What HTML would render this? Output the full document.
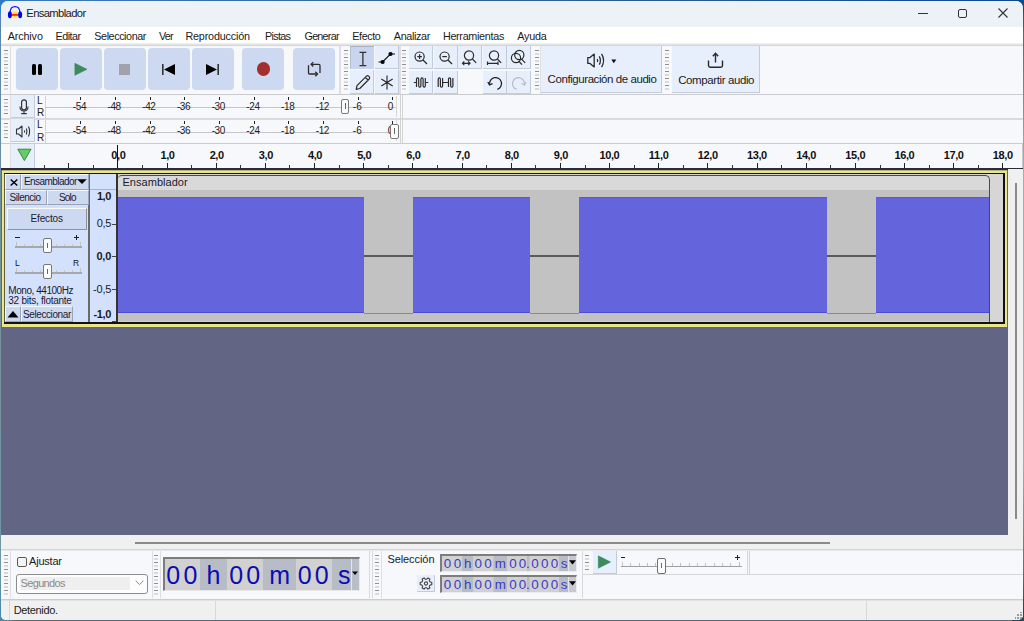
<!DOCTYPE html><html><head><meta charset="utf-8"><style>
*{box-sizing:border-box;margin:0;padding:0}
html,body{width:1024px;height:621px;overflow:hidden;background:#35608a;font-family:"Liberation Sans",sans-serif;color:#1b1b1b}
.a{position:absolute}
.t{position:absolute;white-space:nowrap;font-size:11px;line-height:13px}
.grip{position:absolute;width:4px;background:repeating-linear-gradient(to bottom,#8f8f8f 0,#8f8f8f 1px,transparent 1px,transparent 3px,#dadada 3px,#dadada 5px,transparent 5px,transparent 7px)}
svg{position:absolute;overflow:visible}
</style></head><body>
<div class="a" style="left:0px;top:0px;width:512px;height:310px;background:#4a7cae"></div>
<div class="a" style="left:512px;top:0px;width:512px;height:310px;background:#1c4f88"></div>
<div class="a" style="left:0px;top:310px;width:512px;height:311px;background:#4f86a6"></div>
<div class="a" style="left:512px;top:310px;width:512px;height:311px;background:#24506c"></div>
<div class="a" style="left:0px;top:0px;width:12px;height:12px;background:#2f7bc6"></div>
<div class="a" style="left:1012px;top:0px;width:12px;height:12px;background:#0b4a90"></div>
<div class="a" style="left:1012px;top:609px;width:12px;height:12px;background:#1a4866"></div>
<div class="a" style="left:0px;top:609px;width:12px;height:12px;background:#4a88a8"></div>
<div class="a" style="left:12px;top:620px;width:1000px;height:1px;background:#5a6a72"></div>
<div class="a" style="left:0px;top:12px;width:1px;height:597px;background:linear-gradient(to bottom,#4f82b8 0,#5b87ad 25px,#7a939a 290px,#6f97a6 560px,#4a88a8 597px)"></div>
<div class="a" style="left:1023px;top:12px;width:1px;height:597px;background:linear-gradient(to bottom,#1f5290 0,#4a6a94 25px,#a9abae 150px,#a9abae 450px,#5a6f7c 560px,#1a4866 597px)"></div>
<div class="a" style="left:12px;top:0px;width:1000px;height:1px;background:linear-gradient(to right,#3a78bc,#35669a 400px,#26588f 700px,#0b4a90)"></div>
<div class="a" style="left:1px;top:1px;width:1022px;height:619px;background:#f6f8fc;border-radius:7px 7px 5px 5px;overflow:hidden"></div>
<div class="a" style="left:1px;top:1px;width:1022px;height:26px;background:#edf2f7;border-radius:7px 7px 0 0"></div>
<svg style="left:7px;top:5px" width="16" height="15" viewBox="0 0 16 15">
<defs><radialGradient id="g1" cx="50%" cy="50%" r="50%"><stop offset="0" stop-color="#ffd000"/><stop offset="0.6" stop-color="#ffe040"/><stop offset="1" stop-color="#fff0b0"/></radialGradient></defs>
<path d="M3.2 7.5 Q3.2 1.6 8 1.6 Q12.8 1.6 12.8 7.5" fill="none" stroke="#1414ff" stroke-width="1.1"/>
<ellipse cx="8" cy="9.6" rx="3.6" ry="3.9" fill="url(#g1)"/>
<rect x="4.5" y="9" width="7" height="1.8" fill="#ff2a00"/>
<ellipse cx="2.9" cy="9.8" rx="2" ry="3.5" fill="#0000f0"/>
<ellipse cx="13.1" cy="9.8" rx="2" ry="3.5" fill="#0000f0"/>
</svg>
<div class="t" style="left:26.30px;top:8.3px;font-size:11.2px;line-height:11.2px;font-weight:normal;letter-spacing:-0.609px;color:#202020">Ensamblador</div>
<div class="a" style="left:918px;top:13px;width:10px;height:1px;background:#333"></div>
<div class="a" style="left:958px;top:8.5px;width:9px;height:9px;border:1.2px solid #333;border-radius:2px"></div>
<svg style="left:998px;top:8px" width="10" height="10" viewBox="0 0 10 10"><path d="M0.5 0.5L9.5 9.5M9.5 0.5L0.5 9.5" stroke="#333" stroke-width="1.1"/></svg>
<div class="a" style="left:1px;top:27px;width:1022px;height:17px;background:#ffffff"></div>
<div class="a" style="left:1px;top:43px;width:1022px;height:1px;background:#f0f0f0"></div>
<div class="a" style="left:1px;top:44px;width:1022px;height:1px;background:#e4e4e4"></div>
<div class="a" style="left:1px;top:45px;width:1022px;height:1px;background:#d4d5d8"></div>
<div class="t" style="left:7.70px;top:31px;font-size:10.8px;line-height:10.8px;font-weight:normal;letter-spacing:-0.133px;color:#1b1b1b">Archivo</div>
<div class="t" style="left:55.50px;top:31px;font-size:10.8px;line-height:10.8px;font-weight:normal;letter-spacing:-0.522px;color:#1b1b1b">Editar</div>
<div class="t" style="left:94.30px;top:31px;font-size:10.8px;line-height:10.8px;font-weight:normal;letter-spacing:-0.432px;color:#1b1b1b">Seleccionar</div>
<div class="t" style="left:159.10px;top:31px;font-size:10.8px;line-height:10.8px;font-weight:normal;letter-spacing:-0.900px;color:#1b1b1b">Ver</div>
<div class="t" style="left:185.40px;top:31px;font-size:10.8px;line-height:10.8px;font-weight:normal;letter-spacing:-0.183px;color:#1b1b1b">Reproducción</div>
<div class="t" style="left:265.10px;top:31px;font-size:10.8px;line-height:10.8px;font-weight:normal;letter-spacing:-0.721px;color:#1b1b1b">Pistas</div>
<div class="t" style="left:304.50px;top:31px;font-size:10.8px;line-height:10.8px;font-weight:normal;letter-spacing:-0.769px;color:#1b1b1b">Generar</div>
<div class="t" style="left:352.30px;top:31px;font-size:10.8px;line-height:10.8px;font-weight:normal;letter-spacing:-0.421px;color:#1b1b1b">Efecto</div>
<div class="t" style="left:393.80px;top:31px;font-size:10.8px;line-height:10.8px;font-weight:normal;letter-spacing:-0.359px;color:#1b1b1b">Analizar</div>
<div class="t" style="left:442.90px;top:31px;font-size:10.8px;line-height:10.8px;font-weight:normal;letter-spacing:-0.309px;color:#1b1b1b">Herramientas</div>
<div class="t" style="left:517.30px;top:31px;font-size:10.8px;line-height:10.8px;font-weight:normal;letter-spacing:-0.254px;color:#1b1b1b">Ayuda</div>
<div class="a" style="left:1px;top:46px;width:1022px;height:48px;background:#f6f8fc"></div>
<div class="grip" style="left:4px;top:50px;height:41px"></div>
<div class="a" style="left:10px;top:45px;width:1px;height:49px;background:#dedfe3"></div>
<div class="a" style="left:16px;top:48px;width:42px;height:42px;background:#cdd9f1;border-radius:4px"></div>
<div class="a" style="left:60px;top:48px;width:42px;height:42px;background:#cdd9f1;border-radius:4px"></div>
<div class="a" style="left:104px;top:48px;width:42px;height:42px;background:#cdd9f1;border-radius:4px"></div>
<div class="a" style="left:148px;top:48px;width:42px;height:42px;background:#cdd9f1;border-radius:4px"></div>
<div class="a" style="left:192px;top:48px;width:42px;height:42px;background:#cdd9f1;border-radius:4px"></div>
<div class="a" style="left:242px;top:48px;width:42px;height:42px;background:#cdd9f1;border-radius:4px"></div>
<div class="a" style="left:293px;top:48px;width:42px;height:42px;background:#cdd9f1;border-radius:4px"></div>
<div class="a" style="left:31.5px;top:64px;width:4.5px;height:11px;background:#000;border-radius:1.5px"></div>
<div class="a" style="left:37.8px;top:64px;width:4.5px;height:11px;background:#000;border-radius:1.5px"></div>
<svg style="left:74px;top:63px" width="14" height="13" viewBox="0 0 14 13"><path d="M0.9 0.3 L13 6.3 L0.9 12.3 Z" fill="#3b8b5f" stroke="#3b8b5f" stroke-width="0.6" stroke-linejoin="round"/></svg>
<div class="a" style="left:119px;top:64px;width:11px;height:11px;background:#a1a2aa"></div>
<svg style="left:161px;top:63px" width="16" height="13" viewBox="0 0 16 13"><rect x="1" y="1" width="1.6" height="11" fill="#333"/><path d="M3 6.5 L14 1 L14 12 Z" fill="#000"/></svg>
<svg style="left:205px;top:63px" width="16" height="13" viewBox="0 0 16 13"><path d="M1 1 L12 6.5 L1 12 Z" fill="#000"/><rect x="12.4" y="1" width="1.6" height="11" fill="#333"/></svg>
<div class="a" style="left:256.8px;top:62.4px;width:13.2px;height:13.2px;background:#a3302f;border-radius:50%"></div>
<svg style="left:305px;top:60px" width="18" height="19" viewBox="0 0 18 19"><path d="M3.5 5.2 V12.8 Q3.5 14 4.7 14 H12.3" fill="none" stroke="#2b2b2b" stroke-width="1.3"/><path d="M10.3 11.8 L12.5 14 L10.3 16.2" fill="none" stroke="#2b2b2b" stroke-width="1.3"/><path d="M15 13.1 V5.5 Q15 4.3 13.8 4.3 H6.3" fill="none" stroke="#2b2b2b" stroke-width="1.3"/><path d="M8.3 2.1 L6.1 4.3 L8.3 6.5" fill="none" stroke="#2b2b2b" stroke-width="1.3"/></svg>
<div class="a" style="left:339px;top:45px;width:1px;height:49px;background:#dedfe3"></div>
<div class="a" style="left:340px;top:45px;width:1px;height:49px;background:#dedfe3"></div>
<div class="grip" style="left:344px;top:50px;height:41px"></div>
<div class="a" style="left:350px;top:46px;width:24px;height:23px;background:#c9d5ee;border-top:1px solid #aab3c4;border-left:1px solid #b8c0cf"></div>
<div class="a" style="left:375px;top:46px;width:24px;height:23px;background:#e8effc;border-right:1px solid #c3cad8;border-bottom:1px solid #c3cad8"></div>
<div class="a" style="left:350px;top:70px;width:24px;height:24px;background:#e8effc;border-right:1px solid #c3cad8;border-bottom:1px solid #c3cad8"></div>
<div class="a" style="left:375px;top:70px;width:24px;height:24px;background:#e8effc;border-right:1px solid #c3cad8;border-bottom:1px solid #c3cad8"></div>
<svg style="left:358px;top:51px" width="10" height="16" viewBox="0 0 10 16"><path d="M1.5 1.3 H8.3 M4.9 1.3 V14.6 M1.5 14.6 H8.3" fill="none" stroke="#333" stroke-width="1.3"/></svg>
<svg style="left:377px;top:50px" width="20" height="16" viewBox="0 0 20 16"><path d="M1.5 12 H5.5 L13.5 4 H18" fill="none" stroke="#111" stroke-width="1.2"/><circle cx="5.6" cy="12" r="2.1" fill="#000"/><circle cx="13.5" cy="4" r="2.1" fill="#000"/></svg>
<svg style="left:354px;top:74px" width="18" height="17" viewBox="0 0 18 17"><path d="M2.2 15.3 L3 11.6 L12.5 2.1 Q13.5 1.2 14.6 2.2 L15.3 2.9 Q16.2 4 15.2 5 L5.8 14.5 Z M11.4 3.3 L14.1 6" fill="none" stroke="#2a2a2a" stroke-width="1.2" stroke-linejoin="round"/></svg>
<svg style="left:380px;top:75px" width="14" height="15" viewBox="0 0 14 15"><path d="M7 0.5 V14.5 M1.3 4 L12.7 11 M1.3 11 L12.7 4" fill="none" stroke="#222" stroke-width="1.1"/></svg>
<div class="a" style="left:399px;top:45px;width:1px;height:49px;background:#dedfe3"></div>
<div class="a" style="left:400px;top:45px;width:1px;height:49px;background:#dedfe3"></div>
<div class="grip" style="left:402px;top:50px;height:41px"></div>
<div class="a" style="left:409px;top:46px;width:24px;height:23px;background:#e8effc;border-right:1px solid #c3cad8;border-bottom:1px solid #c3cad8"></div>
<div class="a" style="left:434px;top:46px;width:24px;height:23px;background:#e8effc;border-right:1px solid #c3cad8;border-bottom:1px solid #c3cad8"></div>
<div class="a" style="left:458px;top:46px;width:24px;height:23px;background:#e8effc;border-right:1px solid #c3cad8;border-bottom:1px solid #c3cad8"></div>
<div class="a" style="left:483px;top:46px;width:24px;height:23px;background:#e8effc;border-right:1px solid #c3cad8;border-bottom:1px solid #c3cad8"></div>
<div class="a" style="left:507px;top:46px;width:24px;height:23px;background:#e8effc;border-right:1px solid #c3cad8;border-bottom:1px solid #c3cad8"></div>
<div class="a" style="left:409px;top:71px;width:24px;height:23px;background:#e8effc;border-right:1px solid #c3cad8;border-bottom:1px solid #c3cad8"></div>
<div class="a" style="left:434px;top:71px;width:24px;height:23px;background:#e8effc;border-right:1px solid #c3cad8;border-bottom:1px solid #c3cad8"></div>
<div class="a" style="left:483px;top:71px;width:24px;height:23px;background:#e8effc;border-right:1px solid #c3cad8;border-bottom:1px solid #c3cad8"></div>
<div class="a" style="left:507px;top:71px;width:24px;height:23px;background:#e8effc;border-right:1px solid #c3cad8;border-bottom:1px solid #c3cad8"></div>
<svg style="left:412px;top:49px" width="18" height="18" viewBox="0 0 18 18"><circle cx="7.6" cy="7.6" r="4.6" fill="none" stroke="#2a2a2a" stroke-width="1.2"/><path d="M11 11 L15 15" fill="none" stroke="#2a2a2a" stroke-width="1.2" stroke-width="1.4"/><path d="M5.3 7.6 H9.9 M7.6 5.3 V9.9" fill="none" stroke="#2a2a2a" stroke-width="1.2"/></svg>
<svg style="left:437px;top:49px" width="18" height="18" viewBox="0 0 18 18"><circle cx="7.6" cy="7.6" r="4.6" fill="none" stroke="#2a2a2a" stroke-width="1.2"/><path d="M11 11 L15 15" fill="none" stroke="#2a2a2a" stroke-width="1.2" stroke-width="1.4"/><path d="M5.3 7.6 H9.9" fill="none" stroke="#2a2a2a" stroke-width="1.2"/></svg>
<svg style="left:461px;top:49px" width="18" height="18" viewBox="0 0 18 18"><circle cx="8" cy="6.5" r="4.6" fill="none" stroke="#2a2a2a" stroke-width="1.2"/><path d="M11.4 10 L15.2 13.8" fill="none" stroke="#2a2a2a" stroke-width="1.2" stroke-width="1.4"/><path d="M1.5 14.3 H9 M3.3 12.5 L1.5 14.3 L3.3 16.1 M7.2 12.5 L9 14.3 L7.2 16.1" fill="none" stroke="#2a2a2a" stroke-width="1.2"/></svg>
<svg style="left:486px;top:49px" width="18" height="18" viewBox="0 0 18 18"><circle cx="8" cy="6.5" r="4.6" fill="none" stroke="#2a2a2a" stroke-width="1.2"/><path d="M11.4 10 L15.2 13.8" fill="none" stroke="#2a2a2a" stroke-width="1.2" stroke-width="1.4"/><path d="M1.5 14.3 H12 M1.5 12.6 V16 M12 12.6 V16" fill="none" stroke="#2a2a2a" stroke-width="1.2" stroke-width="1.3"/></svg>
<svg style="left:509px;top:49px" width="20" height="18" viewBox="0 0 20 18"><circle cx="10.3" cy="6" r="4.6" fill="none" stroke="#2a2a2a" stroke-width="1.2"/><circle cx="7" cy="9" r="4.6" fill="none" stroke="#2a2a2a" stroke-width="1.2"/><path d="M12.6 10.2 L16.2 13.8 M9.6 12 L13 15.6" fill="none" stroke="#2a2a2a" stroke-width="1.2" stroke-width="1.3"/></svg>
<svg style="left:413px;top:76px" width="16" height="14" viewBox="0 0 16 14"><path d="M0.8 6.5 H3.2 M12.8 6.5 H15.2" fill="none" stroke="#2a2a2a" stroke-width="1.2"/><path d="M3.5 11 V3.3 Q3.5 1.8 4.6 1.8 Q5.7 1.8 5.7 3.3 V9.7 Q5.7 11.2 6.8 11.2 Q7.9 11.2 7.9 9.7 V3.3 Q7.9 1.8 9 1.8 Q10.1 1.8 10.1 3.3 V9.7 Q10.1 11.2 11.2 11.2 Q12.3 11.2 12.3 9.7 V2" fill="none" stroke="#2a2a2a" stroke-width="1.2" stroke-width="1.1"/></svg>
<svg style="left:437px;top:76px" width="18" height="14" viewBox="0 0 18 14"><path d="M1.2 11 V3.3 Q1.2 1.8 2.3 1.8 Q3.4 1.8 3.4 3.3 V9.7 Q3.4 11.2 4.5 11.2 Q5.6 11.2 5.6 9.7 V2 M5.6 6.5 H11.5 M11.5 11 V3.3 Q11.5 1.8 12.6 1.8 Q13.7 1.8 13.7 3.3 V9.7 Q13.7 11.2 14.8 11.2 Q15.9 11.2 15.9 9.7 V2" fill="none" stroke="#2a2a2a" stroke-width="1.2" stroke-width="1.1"/></svg>
<svg style="left:487px;top:75px" width="16" height="16" viewBox="0 0 16 16"><path d="M2.6 9.4 A6 6 0 1 1 10.4 14.3" fill="none" stroke="#222" stroke-width="1.3"/><path d="M0.8 7 L2.5 10 L5.5 8.6" fill="none" stroke="#222" stroke-width="1.3"/></svg>
<svg style="left:511px;top:75px" width="16" height="16" viewBox="0 0 16 16"><path d="M13.4 9.4 A6 6 0 1 0 5.6 14.3" fill="none" stroke="#b4b8c0" stroke-width="1.1"/><path d="M15.2 7 L13.5 10 L10.5 8.6" fill="none" stroke="#b4b8c0" stroke-width="1.1"/></svg>
<div class="grip" style="left:535px;top:50px;height:41px"></div>
<div class="a" style="left:540px;top:45px;width:1px;height:49px;background:#dedfe3"></div>
<div class="a" style="left:541px;top:46px;width:121px;height:47px;background:#e8effc;border-right:1px solid #c3cad8;border-bottom:1px solid #c3cad8"></div>
<svg style="left:586px;top:53px" width="20" height="15" viewBox="0 0 20 15"><path d="M1.8 4.6 H4 L8.2 1.1 V13.9 L4 10.4 H1.8 Z" fill="none" stroke="#2a2a2a" stroke-width="1.3" stroke-linejoin="round"/><path d="M11.3 6 Q12.1 7.5 11.3 9" fill="none" stroke="#2a2a2a" stroke-width="1.3"/><path d="M13.3 3.4 Q15.6 7.5 13.3 11.6" fill="none" stroke="#2a2a2a" stroke-width="1.3"/><path d="M15.6 0.9 Q19.6 7.5 15.6 14.1" fill="none" stroke="#2a2a2a" stroke-width="1.3"/></svg>
<svg style="left:611px;top:59px" width="6" height="5" viewBox="0 0 6 5"><path d="M0.3 0.4 H5.3 L2.8 4.2 Z" fill="#111"/></svg>
<div class="t" style="left:547.60px;top:73.75px;font-size:11.5px;line-height:11.5px;font-weight:normal;letter-spacing:-0.428px;">Configuración de audio</div>
<div class="grip" style="left:665px;top:50px;height:41px"></div>
<div class="a" style="left:672px;top:46px;width:88px;height:47px;background:#e8effc;border-right:1px solid #c3cad8;border-bottom:1px solid #c3cad8"></div>
<svg style="left:706px;top:51px" width="19" height="18" viewBox="0 0 19 18"><path d="M2.5 9.5 V14.5 Q2.5 16.2 4.2 16.2 H14.8 Q16.5 16.2 16.5 14.5 V9.5" fill="none" stroke="#2a2a2a" stroke-width="1.4"/><path d="M9.5 11.5 V2.5 M6.8 5.3 L9.5 2.3 L12.2 5.3" fill="none" stroke="#2a2a2a" stroke-width="1.4"/></svg>
<div class="t" style="left:678.20px;top:75.05px;font-size:11.5px;line-height:11.5px;font-weight:normal;letter-spacing:-0.394px;">Compartir audio</div>
<div class="a" style="left:1px;top:94px;width:1022px;height:1px;background:#cbcbcd"></div>
<div class="a" style="left:1px;top:95px;width:1022px;height:74px;background:#f6f8fc"></div>
<div class="a" style="left:1px;top:118px;width:1022px;height:2px;background:#dadade"></div>
<div class="a" style="left:1px;top:143px;width:1022px;height:1px;background:#cbcbcd"></div>
<div class="a" style="left:10px;top:95px;width:1px;height:73px;background:#dedfe3"></div>
<div class="grip" style="left:4px;top:99px;height:15px"></div>
<div class="a" style="left:11px;top:95px;width:24px;height:23px;background:#e8effc;border-right:1px solid #c3cad8;border-bottom:1px solid #c3cad8"></div>
<div class="t" style="left:37px;top:96px;font-size:10px;line-height:10px;color:#222">L</div>
<div class="t" style="left:37px;top:108px;font-size:10px;line-height:10px;color:#222">R</div>
<div class="a" style="left:45px;top:96px;width:1px;height:11px;background:#d4d4d4"></div>
<div class="a" style="left:45px;top:108.0px;width:1px;height:10px;background:#d4d4d4"></div>
<div class="a" style="left:45px;top:107px;width:351px;height:1px;background:#c6c6c6"></div>
<div class="a" style="left:396px;top:96px;width:1px;height:21px;background:#d8d8d8"></div>
<div class="a" style="left:80px;top:96.5px;width:1px;height:3px;background:#222"></div>
<div class="t" style="left:72.80px;top:101.8px;font-size:10px;line-height:10px;font-weight:normal;letter-spacing:-0.396px;color:#222">-54</div>
<div class="a" style="left:115px;top:96.5px;width:1px;height:3px;background:#222"></div>
<div class="t" style="left:107.51px;top:101.8px;font-size:10px;line-height:10px;font-weight:normal;letter-spacing:-0.396px;color:#222">-48</div>
<div class="a" style="left:150px;top:96.5px;width:1px;height:3px;background:#222"></div>
<div class="t" style="left:142.22px;top:101.8px;font-size:10px;line-height:10px;font-weight:normal;letter-spacing:-0.396px;color:#222">-42</div>
<div class="a" style="left:184px;top:96.5px;width:1px;height:3px;background:#222"></div>
<div class="t" style="left:176.93px;top:101.8px;font-size:10px;line-height:10px;font-weight:normal;letter-spacing:-0.396px;color:#222">-36</div>
<div class="a" style="left:219px;top:96.5px;width:1px;height:3px;background:#222"></div>
<div class="t" style="left:211.64px;top:101.8px;font-size:10px;line-height:10px;font-weight:normal;letter-spacing:-0.396px;color:#222">-30</div>
<div class="a" style="left:254px;top:96.5px;width:1px;height:3px;background:#222"></div>
<div class="t" style="left:246.35px;top:101.8px;font-size:10px;line-height:10px;font-weight:normal;letter-spacing:-0.396px;color:#222">-24</div>
<div class="a" style="left:288px;top:96.5px;width:1px;height:3px;background:#222"></div>
<div class="t" style="left:281.06px;top:101.8px;font-size:10px;line-height:10px;font-weight:normal;letter-spacing:-0.396px;color:#222">-18</div>
<div class="a" style="left:323px;top:96.5px;width:1px;height:3px;background:#222"></div>
<div class="t" style="left:315.77px;top:101.8px;font-size:10px;line-height:10px;font-weight:normal;letter-spacing:-0.396px;color:#222">-12</div>
<div class="a" style="left:358px;top:96.5px;width:1px;height:3px;background:#222"></div>
<div class="t" style="left:352.78px;top:101.8px;font-size:10px;line-height:10px;font-weight:normal;letter-spacing:0.170px;color:#222">-6</div>
<div class="a" style="left:392px;top:96.5px;width:1px;height:3px;background:#222"></div>
<div class="t" style="left:387.64px;top:101.8px;font-size:10px;line-height:10px;font-weight:normal;letter-spacing:0.000px;color:#222">0</div>
<div class="grip" style="left:4px;top:123px;height:15px"></div>
<div class="a" style="left:11px;top:119px;width:24px;height:23px;background:#e8effc;border-right:1px solid #c3cad8;border-bottom:1px solid #c3cad8"></div>
<div class="t" style="left:37px;top:120px;font-size:10px;line-height:10px;color:#222">L</div>
<div class="t" style="left:37px;top:133px;font-size:10px;line-height:10px;color:#222">R</div>
<div class="a" style="left:45px;top:120px;width:1px;height:11px;background:#d4d4d4"></div>
<div class="a" style="left:45px;top:132.6px;width:1px;height:10px;background:#d4d4d4"></div>
<div class="a" style="left:45px;top:132px;width:351px;height:1px;background:#c6c6c6"></div>
<div class="a" style="left:396px;top:120px;width:1px;height:21px;background:#d8d8d8"></div>
<div class="a" style="left:80px;top:121.1px;width:1px;height:3px;background:#222"></div>
<div class="t" style="left:72.80px;top:126.4px;font-size:10px;line-height:10px;font-weight:normal;letter-spacing:-0.396px;color:#222">-54</div>
<div class="a" style="left:115px;top:121.1px;width:1px;height:3px;background:#222"></div>
<div class="t" style="left:107.51px;top:126.4px;font-size:10px;line-height:10px;font-weight:normal;letter-spacing:-0.396px;color:#222">-48</div>
<div class="a" style="left:150px;top:121.1px;width:1px;height:3px;background:#222"></div>
<div class="t" style="left:142.22px;top:126.4px;font-size:10px;line-height:10px;font-weight:normal;letter-spacing:-0.396px;color:#222">-42</div>
<div class="a" style="left:184px;top:121.1px;width:1px;height:3px;background:#222"></div>
<div class="t" style="left:176.93px;top:126.4px;font-size:10px;line-height:10px;font-weight:normal;letter-spacing:-0.396px;color:#222">-36</div>
<div class="a" style="left:219px;top:121.1px;width:1px;height:3px;background:#222"></div>
<div class="t" style="left:211.64px;top:126.4px;font-size:10px;line-height:10px;font-weight:normal;letter-spacing:-0.396px;color:#222">-30</div>
<div class="a" style="left:254px;top:121.1px;width:1px;height:3px;background:#222"></div>
<div class="t" style="left:246.35px;top:126.4px;font-size:10px;line-height:10px;font-weight:normal;letter-spacing:-0.396px;color:#222">-24</div>
<div class="a" style="left:288px;top:121.1px;width:1px;height:3px;background:#222"></div>
<div class="t" style="left:281.06px;top:126.4px;font-size:10px;line-height:10px;font-weight:normal;letter-spacing:-0.396px;color:#222">-18</div>
<div class="a" style="left:323px;top:121.1px;width:1px;height:3px;background:#222"></div>
<div class="t" style="left:315.77px;top:126.4px;font-size:10px;line-height:10px;font-weight:normal;letter-spacing:-0.396px;color:#222">-12</div>
<div class="a" style="left:358px;top:121.1px;width:1px;height:3px;background:#222"></div>
<div class="t" style="left:352.78px;top:126.4px;font-size:10px;line-height:10px;font-weight:normal;letter-spacing:0.170px;color:#222">-6</div>
<div class="a" style="left:392px;top:121.1px;width:1px;height:3px;background:#222"></div>
<div class="t" style="left:387.64px;top:126.4px;font-size:10px;line-height:10px;font-weight:normal;letter-spacing:0.000px;color:#222">0</div>
<div class="a" style="left:400px;top:95px;width:1px;height:48px;background:#d4d4d4"></div>
<div class="a" style="left:402px;top:95px;width:1px;height:48px;background:#d4d4d4"></div>
<svg style="left:17.8px;top:99.3px" width="12" height="16" viewBox="0 0 12 16"><rect x="3.6" y="0.8" width="4.8" height="10" rx="2.4" fill="none" stroke="#333" stroke-width="1.2"/><path d="M2 7.5 Q2 12 6 12 Q10 12 10 7.5 M6 12 V14 M3.2 14.6 H8.8" fill="none" stroke="#333" stroke-width="1.1"/></svg>
<svg style="left:15px;top:125px" width="17" height="13" viewBox="0 0 17 13"><path d="M1.5 4 H3.6 L7 1 V12 L3.6 9 H1.5 Z" fill="none" stroke="#333" stroke-width="1.1" stroke-linejoin="round"/><path d="M9.4 5.5 Q9.9 6.5 9.4 7.5" fill="none" stroke="#333" stroke-width="1.1"/><path d="M11.3 3.6 Q12.8 6.5 11.3 9.4" fill="none" stroke="#333" stroke-width="1.1"/><path d="M13.4 1.6 Q15.9 6.5 13.4 11.4" fill="none" stroke="#333" stroke-width="1.1"/></svg>
<div class="a" style="left:341px;top:98.5px;width:8px;height:15px;background:#fbfbfb;border:1px solid #7a7a7a;border-radius:2px"></div>
<div class="a" style="left:344.6px;top:103px;width:1px;height:6px;background:#666"></div>
<div class="a" style="left:390px;top:123.5px;width:8.5px;height:15px;background:#fbfbfb;border:1px solid #7a7a7a;border-radius:2px"></div>
<div class="a" style="left:393.8px;top:128px;width:1px;height:6px;background:#666"></div>
<div class="a" style="left:11px;top:144px;width:24px;height:24px;background:#e8effc;border-right:1px solid #c3cad8"></div>
<svg style="left:17px;top:148px" width="15" height="14" viewBox="0 0 15 14"><path d="M0.8 1.2 H14 L7.4 12.6 Z" fill="#66cc66" stroke="#2e7d32" stroke-width="0.9" stroke-linejoin="round"/></svg>
<div class="a" style="left:44px;top:165px;width:1px;height:3px;background:#333"></div>
<div class="a" style="left:68px;top:163px;width:1px;height:5px;background:#222"></div>
<div class="a" style="left:93px;top:165px;width:1px;height:3px;background:#333"></div>
<div class="a" style="left:117px;top:163px;width:1px;height:5px;background:#222"></div>
<div class="t" style="left:111.30px;top:150.4px;font-size:11px;line-height:11px;font-weight:bold;letter-spacing:-0.387px;color:#111">0,0</div>
<div class="a" style="left:142px;top:165px;width:1px;height:3px;background:#333"></div>
<div class="a" style="left:167px;top:163px;width:1px;height:5px;background:#222"></div>
<div class="t" style="left:160.47px;top:150.4px;font-size:11px;line-height:11px;font-weight:bold;letter-spacing:-0.387px;color:#111">1,0</div>
<div class="a" style="left:191px;top:165px;width:1px;height:3px;background:#333"></div>
<div class="a" style="left:216px;top:163px;width:1px;height:5px;background:#222"></div>
<div class="t" style="left:209.64px;top:150.4px;font-size:11px;line-height:11px;font-weight:bold;letter-spacing:-0.387px;color:#111">2,0</div>
<div class="a" style="left:240px;top:165px;width:1px;height:3px;background:#333"></div>
<div class="a" style="left:265px;top:163px;width:1px;height:5px;background:#222"></div>
<div class="t" style="left:258.81px;top:150.4px;font-size:11px;line-height:11px;font-weight:bold;letter-spacing:-0.387px;color:#111">3,0</div>
<div class="a" style="left:289px;top:165px;width:1px;height:3px;background:#333"></div>
<div class="a" style="left:314px;top:163px;width:1px;height:5px;background:#222"></div>
<div class="t" style="left:307.98px;top:150.4px;font-size:11px;line-height:11px;font-weight:bold;letter-spacing:-0.387px;color:#111">4,0</div>
<div class="a" style="left:339px;top:165px;width:1px;height:3px;background:#333"></div>
<div class="a" style="left:363px;top:163px;width:1px;height:5px;background:#222"></div>
<div class="t" style="left:357.15px;top:150.4px;font-size:11px;line-height:11px;font-weight:bold;letter-spacing:-0.387px;color:#111">5,0</div>
<div class="a" style="left:388px;top:165px;width:1px;height:3px;background:#333"></div>
<div class="a" style="left:412px;top:163px;width:1px;height:5px;background:#222"></div>
<div class="t" style="left:406.32px;top:150.4px;font-size:11px;line-height:11px;font-weight:bold;letter-spacing:-0.387px;color:#111">6,0</div>
<div class="a" style="left:437px;top:165px;width:1px;height:3px;background:#333"></div>
<div class="a" style="left:462px;top:163px;width:1px;height:5px;background:#222"></div>
<div class="t" style="left:455.49px;top:150.4px;font-size:11px;line-height:11px;font-weight:bold;letter-spacing:-0.387px;color:#111">7,0</div>
<div class="a" style="left:486px;top:165px;width:1px;height:3px;background:#333"></div>
<div class="a" style="left:511px;top:163px;width:1px;height:5px;background:#222"></div>
<div class="t" style="left:504.66px;top:150.4px;font-size:11px;line-height:11px;font-weight:bold;letter-spacing:-0.387px;color:#111">8,0</div>
<div class="a" style="left:535px;top:165px;width:1px;height:3px;background:#333"></div>
<div class="a" style="left:560px;top:163px;width:1px;height:5px;background:#222"></div>
<div class="t" style="left:553.83px;top:150.4px;font-size:11px;line-height:11px;font-weight:bold;letter-spacing:-0.387px;color:#111">9,0</div>
<div class="a" style="left:585px;top:165px;width:1px;height:3px;background:#333"></div>
<div class="a" style="left:609px;top:163px;width:1px;height:5px;background:#222"></div>
<div class="t" style="left:599.50px;top:150.4px;font-size:11px;line-height:11px;font-weight:bold;letter-spacing:-0.397px;color:#111">10,0</div>
<div class="a" style="left:634px;top:165px;width:1px;height:3px;background:#333"></div>
<div class="a" style="left:658px;top:163px;width:1px;height:5px;background:#222"></div>
<div class="t" style="left:648.67px;top:150.4px;font-size:11px;line-height:11px;font-weight:bold;letter-spacing:-0.195px;color:#111">11,0</div>
<div class="a" style="left:683px;top:165px;width:1px;height:3px;background:#333"></div>
<div class="a" style="left:707px;top:163px;width:1px;height:5px;background:#222"></div>
<div class="t" style="left:697.84px;top:150.4px;font-size:11px;line-height:11px;font-weight:bold;letter-spacing:-0.397px;color:#111">12,0</div>
<div class="a" style="left:732px;top:165px;width:1px;height:3px;background:#333"></div>
<div class="a" style="left:757px;top:163px;width:1px;height:5px;background:#222"></div>
<div class="t" style="left:747.01px;top:150.4px;font-size:11px;line-height:11px;font-weight:bold;letter-spacing:-0.397px;color:#111">13,0</div>
<div class="a" style="left:781px;top:165px;width:1px;height:3px;background:#333"></div>
<div class="a" style="left:806px;top:163px;width:1px;height:5px;background:#222"></div>
<div class="t" style="left:796.18px;top:150.4px;font-size:11px;line-height:11px;font-weight:bold;letter-spacing:-0.397px;color:#111">14,0</div>
<div class="a" style="left:830px;top:165px;width:1px;height:3px;background:#333"></div>
<div class="a" style="left:855px;top:163px;width:1px;height:5px;background:#222"></div>
<div class="t" style="left:845.35px;top:150.4px;font-size:11px;line-height:11px;font-weight:bold;letter-spacing:-0.397px;color:#111">15,0</div>
<div class="a" style="left:880px;top:165px;width:1px;height:3px;background:#333"></div>
<div class="a" style="left:904px;top:163px;width:1px;height:5px;background:#222"></div>
<div class="t" style="left:894.52px;top:150.4px;font-size:11px;line-height:11px;font-weight:bold;letter-spacing:-0.397px;color:#111">16,0</div>
<div class="a" style="left:929px;top:165px;width:1px;height:3px;background:#333"></div>
<div class="a" style="left:953px;top:163px;width:1px;height:5px;background:#222"></div>
<div class="t" style="left:943.69px;top:150.4px;font-size:11px;line-height:11px;font-weight:bold;letter-spacing:-0.397px;color:#111">17,0</div>
<div class="a" style="left:978px;top:165px;width:1px;height:3px;background:#333"></div>
<div class="a" style="left:1002px;top:163px;width:1px;height:5px;background:#222"></div>
<div class="t" style="left:992.86px;top:150.4px;font-size:11px;line-height:11px;font-weight:bold;letter-spacing:-0.397px;color:#111">18,0</div>
<div class="a" style="left:117px;top:145px;width:1px;height:23px;background:#111"></div>
<div class="a" style="left:1022px;top:143px;width:1px;height:26px;background:#c8c8c8"></div>
<div class="a" style="left:1px;top:168px;width:1007px;height:367px;background:#636584"></div>
<div class="a" style="left:1px;top:168px;width:1022px;height:2px;background:#2a2c3c"></div>
<div class="a" style="left:2px;top:170px;width:1005px;height:157px;background:#e9e789"></div>
<div class="a" style="left:2px;top:170px;width:1005px;height:1px;background:#b4b27a"></div>
<div class="a" style="left:4px;top:173px;width:1001px;height:151px;background:#111"></div>
<div class="a" style="left:4px;top:174px;width:1px;height:148px;background:#5e5e3c"></div>
<div class="a" style="left:5px;top:174px;width:84px;height:148px;background:#d4e1fd"></div>
<div class="a" style="left:88.3px;top:174px;width:1.6px;height:148px;background:#6a6a6a"></div>
<div class="a" style="left:90px;top:174px;width:26px;height:148px;background:#d4e1fd"></div>
<div class="a" style="left:90px;top:189px;width:26px;height:1px;background:#a9b2c4"></div>
<div class="a" style="left:116px;top:174px;width:1.8px;height:148px;background:#333"></div>
<div class="a" style="left:5px;top:174px;width:16px;height:16px;background:#cdd9f1;border-top:1px solid #f4f7fd;border-left:1px solid #f4f7fd;border-right:1px solid #9aa3b3;border-bottom:1px solid #9aa3b3"></div>
<svg style="left:10px;top:179px" width="8" height="7" viewBox="0 0 8 7"><path d="M0.7 0.4 L7.3 6.6 M7.3 0.4 L0.7 6.6" stroke="#000" stroke-width="1.4"/></svg>
<div class="a" style="left:21px;top:174px;width:68px;height:16px;background:#cdd9f1;border-top:1px solid #f4f7fd;border-left:1px solid #f4f7fd;border-right:1px solid #9aa3b3;border-bottom:1px solid #9aa3b3"></div>
<div class="t" style="left:23.90px;top:176.8px;font-size:10px;line-height:10px;font-weight:normal;letter-spacing:-0.559px;color:#1a1a30">Ensamblador</div>
<svg style="left:77.3px;top:179.3px" width="10" height="5" viewBox="0 0 10 5"><path d="M0.2 0.2 H9.8 L5 5 Z" fill="#000"/></svg>
<div class="a" style="left:5px;top:190px;width:42px;height:15px;background:#cdd9f1;border-top:1px solid #f4f7fd;border-left:1px solid #f4f7fd;border-right:1px solid #9aa3b3;border-bottom:1px solid #9aa3b3"></div>
<div class="a" style="left:47px;top:190px;width:42px;height:15px;background:#cdd9f1;border-top:1px solid #f4f7fd;border-left:1px solid #f4f7fd;border-right:1px solid #9aa3b3;border-bottom:1px solid #9aa3b3"></div>
<div class="t" style="left:9.60px;top:193.0px;font-size:10px;line-height:10px;font-weight:normal;letter-spacing:-0.523px;color:#1a1a30">Silencio</div>
<div class="t" style="left:59.00px;top:193.0px;font-size:10px;line-height:10px;font-weight:normal;letter-spacing:-0.818px;color:#1a1a30">Solo</div>
<div class="a" style="left:7px;top:208px;width:80px;height:22px;background:#cdd9f1;border-top:1.5px solid #f8faff;border-left:1.5px solid #f8faff;border-right:1.5px solid #8a92a0;border-bottom:1.5px solid #8a92a0"></div>
<div class="t" style="left:30.60px;top:213.5px;font-size:10px;line-height:10px;font-weight:normal;letter-spacing:-0.175px;color:#1a1a30">Efectos</div>
<div class="a" style="left:15px;top:237px;width:5px;height:1px;background:#222"></div>
<div class="a" style="left:74px;top:237px;width:5px;height:1px;background:#222"></div>
<div class="a" style="left:76px;top:235px;width:1px;height:5px;background:#222"></div>
<div class="a" style="left:15px;top:246px;width:67px;height:1.5px;background:#a8a8a8"></div>
<div class="a" style="left:15.5px;top:242px;width:1px;height:4px;background:#c4c4c4"></div>
<div class="a" style="left:23.6px;top:243.5px;width:1px;height:2.5px;background:#c4c4c4"></div>
<div class="a" style="left:31.7px;top:243.5px;width:1px;height:2.5px;background:#c4c4c4"></div>
<div class="a" style="left:39.8px;top:243.5px;width:1px;height:2.5px;background:#c4c4c4"></div>
<div class="a" style="left:47.9px;top:243.5px;width:1px;height:2.5px;background:#c4c4c4"></div>
<div class="a" style="left:56.0px;top:243.5px;width:1px;height:2.5px;background:#c4c4c4"></div>
<div class="a" style="left:64.1px;top:243.5px;width:1px;height:2.5px;background:#c4c4c4"></div>
<div class="a" style="left:72.19999999999999px;top:243.5px;width:1px;height:2.5px;background:#c4c4c4"></div>
<div class="a" style="left:80.3px;top:242px;width:1px;height:4px;background:#c4c4c4"></div>
<div class="a" style="left:43.4px;top:238.3px;width:8.4px;height:15px;background:#fdfdfd;border:1px solid #777;border-radius:2px"></div>
<div class="a" style="left:47px;top:243px;width:1px;height:5px;background:#666"></div>
<div class="t" style="left:15.00px;top:258.75px;font-size:8.5px;line-height:8.5px;font-weight:normal;letter-spacing:0.000px;color:#111">L</div>
<div class="t" style="left:73.00px;top:258.75px;font-size:8.5px;line-height:8.5px;font-weight:normal;letter-spacing:0.000px;color:#111">R</div>
<div class="a" style="left:15px;top:272px;width:67px;height:1.5px;background:#a8a8a8"></div>
<div class="a" style="left:15.5px;top:268px;width:1px;height:4px;background:#c4c4c4"></div>
<div class="a" style="left:23.6px;top:269.5px;width:1px;height:2.5px;background:#c4c4c4"></div>
<div class="a" style="left:31.7px;top:269.5px;width:1px;height:2.5px;background:#c4c4c4"></div>
<div class="a" style="left:39.8px;top:269.5px;width:1px;height:2.5px;background:#c4c4c4"></div>
<div class="a" style="left:47.9px;top:269.5px;width:1px;height:2.5px;background:#c4c4c4"></div>
<div class="a" style="left:56.0px;top:269.5px;width:1px;height:2.5px;background:#c4c4c4"></div>
<div class="a" style="left:64.1px;top:269.5px;width:1px;height:2.5px;background:#c4c4c4"></div>
<div class="a" style="left:72.19999999999999px;top:269.5px;width:1px;height:2.5px;background:#c4c4c4"></div>
<div class="a" style="left:80.3px;top:268px;width:1px;height:4px;background:#c4c4c4"></div>
<div class="a" style="left:43.4px;top:264.3px;width:8.4px;height:15px;background:#fdfdfd;border:1px solid #777;border-radius:2px"></div>
<div class="a" style="left:47px;top:269px;width:1px;height:5px;background:#666"></div>
<div class="t" style="left:8.30px;top:285.6px;font-size:10px;line-height:10px;font-weight:normal;letter-spacing:-0.450px;color:#1a1a30">Mono, 44100Hz</div>
<div class="t" style="left:8.30px;top:296.0px;font-size:10px;line-height:10px;font-weight:normal;letter-spacing:-0.266px;color:#1a1a30">32 bits, flotante</div>
<div class="a" style="left:5px;top:306px;width:16px;height:16px;background:#cdd9f1;border-top:1px solid #f4f7fd;border-left:1px solid #f4f7fd;border-right:1px solid #9aa3b3;border-bottom:1px solid #9aa3b3"></div>
<svg style="left:7px;top:310px" width="12" height="8" viewBox="0 0 12 8"><path d="M0.5 7.5 H11.5 L6 1 Z" fill="#000"/></svg>
<div class="a" style="left:21px;top:306px;width:52px;height:16px;background:#cdd9f1;border-top:1px solid #f4f7fd;border-left:1px solid #f4f7fd;border-right:1px solid #9aa3b3;border-bottom:1px solid #9aa3b3"></div>
<div class="t" style="left:23.00px;top:309.5px;font-size:10px;line-height:10px;font-weight:normal;letter-spacing:-0.402px;color:#1a1a30">Seleccionar</div>
<div class="t" style="left:96.90px;top:191.0px;font-size:11px;line-height:11px;font-weight:bold;letter-spacing:-0.387px;color:#1a1a20">1,0</div>
<div class="t" style="left:96.70px;top:218.4px;font-size:11px;line-height:11px;font-weight:normal;letter-spacing:-0.287px;color:#1a1a20">0,5</div>
<div class="t" style="left:96.40px;top:250.6px;font-size:11px;line-height:11px;font-weight:bold;letter-spacing:-0.137px;color:#1a1a20">0,0</div>
<div class="t" style="left:93.00px;top:283.8px;font-size:11px;line-height:11px;font-weight:normal;letter-spacing:-0.179px;color:#1a1a20">-0,5</div>
<div class="t" style="left:93.50px;top:309.2px;font-size:11px;line-height:11px;font-weight:bold;letter-spacing:-0.346px;color:#1a1a20">-1,0</div>
<div class="a" style="left:112px;top:224px;width:4px;height:1.3px;background:#444"></div>
<div class="a" style="left:112px;top:256px;width:4px;height:1.3px;background:#444"></div>
<div class="a" style="left:112px;top:289px;width:4px;height:1.3px;background:#444"></div>
<div class="a" style="left:112px;top:321px;width:4px;height:1px;background:#444"></div>
<div class="a" style="left:118px;top:174px;width:885px;height:148px;background:#d6d6d6"></div>
<div class="a" style="left:118px;top:175px;width:872px;height:147px;background:#d9d9d9;border-top:1px solid #4a4a4a;border-right:1px solid #4a4a4a;border-radius:4px 5px 0 0"></div>
<div class="t" style="left:122.50px;top:176.5px;font-size:11px;line-height:11px;font-weight:normal;letter-spacing:0.035px;color:#1a1a30">Ensamblador</div>
<div class="a" style="left:118px;top:190px;width:871px;height:132px;background:#c2c2c2"></div>
<div class="a" style="left:118px;top:197px;width:246px;height:116px;background:#6464dc"></div>
<div class="a" style="left:118px;top:312px;width:246px;height:1px;background:#4a4ad8"></div>
<div class="a" style="left:118px;top:197px;width:246px;height:1px;background:#5a5ad8"></div>
<div class="a" style="left:413px;top:197px;width:117px;height:116px;background:#6464dc"></div>
<div class="a" style="left:413px;top:312px;width:117px;height:1px;background:#4a4ad8"></div>
<div class="a" style="left:413px;top:197px;width:117px;height:1px;background:#5a5ad8"></div>
<div class="a" style="left:579px;top:197px;width:248px;height:116px;background:#6464dc"></div>
<div class="a" style="left:579px;top:312px;width:248px;height:1px;background:#4a4ad8"></div>
<div class="a" style="left:579px;top:197px;width:248px;height:1px;background:#5a5ad8"></div>
<div class="a" style="left:876px;top:197px;width:113px;height:116px;background:#6464dc"></div>
<div class="a" style="left:876px;top:312px;width:113px;height:1px;background:#4a4ad8"></div>
<div class="a" style="left:876px;top:197px;width:113px;height:1px;background:#5a5ad8"></div>
<div class="a" style="left:364px;top:255.4px;width:49px;height:1.4px;background:#5a5a5a"></div>
<div class="a" style="left:364px;top:313px;width:49px;height:1px;background:#8080d0"></div>
<div class="a" style="left:530px;top:255.4px;width:49px;height:1.4px;background:#5a5a5a"></div>
<div class="a" style="left:530px;top:313px;width:49px;height:1px;background:#8080d0"></div>
<div class="a" style="left:827px;top:255.4px;width:49px;height:1.4px;background:#5a5a5a"></div>
<div class="a" style="left:827px;top:313px;width:49px;height:1px;background:#8080d0"></div>
<div class="a" style="left:118px;top:321px;width:871px;height:1px;background:#d2d2d2"></div>
<div class="a" style="left:1008px;top:169px;width:15px;height:366px;background:#f0f0f0"></div>
<div class="a" style="left:1015px;top:183px;width:2px;height:336px;background:#8a8a8a"></div>
<div class="a" style="left:1px;top:535px;width:1022px;height:15px;background:#f0f0f0"></div>
<div class="a" style="left:135px;top:542px;width:695px;height:2px;background:#8a8a8a"></div>
<div class="a" style="left:1px;top:550px;width:1022px;height:49px;background:#f6f8fc"></div>
<div class="a" style="left:1px;top:549px;width:1022px;height:1px;background:#d2d3d6"></div>
<div class="a" style="left:1px;top:550px;width:1022px;height:1px;background:#e8e9ec"></div>
<div class="a" style="left:583px;top:574px;width:440px;height:1px;background:#d6d7da"></div>
<div class="a" style="left:1px;top:599px;width:1022px;height:1px;background:#cbcbcd"></div>
<div class="grip" style="left:4px;top:555px;height:41px"></div>
<div class="a" style="left:10px;top:551px;width:1px;height:47px;background:#dedfe3"></div>
<div class="a" style="left:16.5px;top:556.5px;width:10px;height:10.5px;background:#f4f4f4;border:1px solid #5a5a5a;border-radius:2px"></div>
<div class="t" style="left:29.10px;top:556.2px;font-size:11px;line-height:11px;font-weight:normal;letter-spacing:-0.229px;color:#1b1b1b">Ajustar</div>
<div class="a" style="left:16px;top:573.5px;width:132px;height:20.5px;background:#fdfdfd;border:1px solid #8c8c8c;border-radius:3px"></div>
<div class="a" style="left:20px;top:577px;width:110px;height:13px;background:#efefef"></div>
<div class="t" style="left:20.50px;top:578.0px;font-size:11px;line-height:11px;font-weight:normal;letter-spacing:-0.649px;color:#8a8a8a">Segundos</div>
<svg style="left:135px;top:580px" width="9" height="6" viewBox="0 0 9 6"><path d="M0.7 0.7 L4.5 4.6 L8.3 0.7" fill="none" stroke="#8a8a8a" stroke-width="1"/></svg>
<div class="a" style="left:152px;top:551px;width:1px;height:47px;background:#dcdde0"></div>
<div class="grip" style="left:154px;top:555px;height:41px"></div>
<div class="a" style="left:160px;top:551px;width:1px;height:47px;background:#dedfe3"></div>
<div class="a" style="left:163px;top:557px;width:197px;height:34px;background:#c3c5cb;border-top:2px solid #7d7d7d;border-left:2px solid #7d7d7d;border-right:1px solid #e8e8e8;border-bottom:1px solid #e8e8e8"></div>
<div class="a" style="left:165px;top:559px;width:35.400000000000006px;height:31px;background:#d1d1d1"></div>
<div class="a" style="left:200.4px;top:559px;width:26.900000000000006px;height:31px;background:#b8bcc6"></div>
<div class="a" style="left:227.3px;top:559px;width:35.69999999999999px;height:31px;background:#d1d1d1"></div>
<div class="a" style="left:263px;top:559px;width:32.80000000000001px;height:31px;background:#b8bcc6"></div>
<div class="a" style="left:295.8px;top:559px;width:35.80000000000001px;height:31px;background:#d1d1d1"></div>
<div class="a" style="left:331.6px;top:559px;width:19.399999999999977px;height:31px;background:#b8bcc6"></div>
<div class="a" style="left:351px;top:559px;width:8px;height:31px;background:#b9bdc7"></div>
<div class="a" style="left:351px;top:559px;width:1px;height:31px;background:#e6e6e6"></div>
<div class="t" style="left:166.3px;top:563px;font-size:25px;line-height:25px;color:#0c0cb0">0</div>
<div class="t" style="left:183.4px;top:563px;font-size:25px;line-height:25px;color:#0c0cb0">0</div>
<div class="t" style="left:206.5px;top:563px;font-size:25px;line-height:25px;color:#0c0cb0">h</div>
<div class="t" style="left:229.3px;top:563px;font-size:25px;line-height:25px;color:#0c0cb0">0</div>
<div class="t" style="left:246.3px;top:563px;font-size:25px;line-height:25px;color:#0c0cb0">0</div>
<div class="t" style="left:269.3px;top:563px;font-size:25px;line-height:25px;color:#0c0cb0">m</div>
<div class="t" style="left:297.8px;top:563px;font-size:25px;line-height:25px;color:#0c0cb0">0</div>
<div class="t" style="left:314.8px;top:563px;font-size:25px;line-height:25px;color:#0c0cb0">0</div>
<div class="t" style="left:338px;top:563px;font-size:25px;line-height:25px;color:#0c0cb0">s</div>
<svg style="left:352px;top:571px" width="6" height="5" viewBox="0 0 6 5"><path d="M0 0.5 H6 L3 4 Z" fill="#000"/></svg>
<div class="a" style="left:369px;top:551px;width:1px;height:47px;background:#d8d9dc"></div>
<div class="a" style="left:372px;top:551px;width:1px;height:47px;background:#d8d9dc"></div>
<div class="grip" style="left:375px;top:555px;height:41px"></div>
<div class="a" style="left:381px;top:551px;width:1px;height:47px;background:#dedfe3"></div>
<div class="t" style="left:387.40px;top:554.4px;font-size:11px;line-height:11px;font-weight:normal;letter-spacing:-0.072px;color:#1b1b1b">Selección</div>
<div class="a" style="left:417px;top:575px;width:18px;height:17px;background:#e8effc;border-right:1px solid #c3cad8;border-bottom:1px solid #c3cad8"></div>
<svg style="left:419px;top:577px" width="14" height="13" viewBox="0 0 14 13"><path d="M11.16 5.07 L12.79 5.37 L12.79 7.63 L11.16 7.93 L10.32 9.39 L10.87 10.95 L8.92 12.08 L7.84 10.82 L6.16 10.82 L5.08 12.08 L3.13 10.95 L3.68 9.39 L2.84 7.93 L1.21 7.63 L1.21 5.37 L2.84 5.07 L3.68 3.61 L3.13 2.05 L5.08 0.92 L6.16 2.18 L7.84 2.18 L8.92 0.92 L10.87 2.05 L10.32 3.61 Z" fill="none" stroke="#444" stroke-width="1.1" stroke-linejoin="round"/><circle cx="7" cy="6.5" r="1.6" fill="none" stroke="#444" stroke-width="1.1"/></svg>
<div class="a" style="left:440px;top:554px;width:137px;height:18px;background:#c3c5cb;border-top:2px solid #7d7d7d;border-left:2px solid #7d7d7d;border-right:1px solid #ececec;border-bottom:1px solid #ececec"></div>
<div class="a" style="left:442px;top:556px;width:20.30000000000001px;height:15px;background:#d1d1d1"></div>
<div class="a" style="left:462.3px;top:556px;width:10.399999999999977px;height:15px;background:#b8bcc6"></div>
<div class="a" style="left:472.7px;top:556px;width:20.80000000000001px;height:15px;background:#d1d1d1"></div>
<div class="a" style="left:493.5px;top:556px;width:13.800000000000011px;height:15px;background:#b8bcc6"></div>
<div class="a" style="left:507.3px;top:556px;width:19.499999999999943px;height:15px;background:#d1d1d1"></div>
<div class="a" style="left:526.8px;top:556px;width:2.7000000000000455px;height:15px;background:#b8bcc6"></div>
<div class="a" style="left:529.5px;top:556px;width:29.200000000000045px;height:15px;background:#d1d1d1"></div>
<div class="a" style="left:558.7px;top:556px;width:9.0px;height:15px;background:#b8bcc6"></div>
<div class="a" style="left:567.7px;top:556px;width:8.3px;height:15px;background:#c7c9cf"></div>
<div class="a" style="left:567.7px;top:556px;width:1px;height:15px;background:#e6e6e6"></div>
<div class="t" style="left:447.54999999999995px;top:557px;font-size:13.4px;line-height:14px;color:#3a3ac8;transform:translateX(-50%)">0</div>
<div class="t" style="left:457.4px;top:557px;font-size:13.4px;line-height:14px;color:#3a3ac8;transform:translateX(-50%)">0</div>
<div class="t" style="left:467.70000000000005px;top:557px;font-size:13.4px;line-height:14px;color:#3a3ac8;transform:translateX(-50%)">h</div>
<div class="t" style="left:478.2px;top:557px;font-size:13.4px;line-height:14px;color:#3a3ac8;transform:translateX(-50%)">0</div>
<div class="t" style="left:487.9px;top:557px;font-size:13.4px;line-height:14px;color:#3a3ac8;transform:translateX(-50%)">0</div>
<div class="t" style="left:500.45000000000005px;top:557px;font-size:13.4px;line-height:14px;color:#3a3ac8;transform:translateX(-50%)">m</div>
<div class="t" style="left:512.9000000000001px;top:557px;font-size:13.4px;line-height:14px;color:#3a3ac8;transform:translateX(-50%)">0</div>
<div class="t" style="left:522.55px;top:557px;font-size:13.4px;line-height:14px;color:#3a3ac8;transform:translateX(-50%)">0</div>
<div class="t" style="left:527.75px;top:557px;font-size:13.4px;line-height:14px;color:#3a3ac8;transform:translateX(-50%)">.</div>
<div class="t" style="left:535.05px;top:557px;font-size:13.4px;line-height:14px;color:#3a3ac8;transform:translateX(-50%)">0</div>
<div class="t" style="left:544.75px;top:557px;font-size:13.4px;line-height:14px;color:#3a3ac8;transform:translateX(-50%)">0</div>
<div class="t" style="left:554.45px;top:557px;font-size:13.4px;line-height:14px;color:#3a3ac8;transform:translateX(-50%)">0</div>
<div class="t" style="left:564.2px;top:557px;font-size:13.4px;line-height:14px;color:#3a3ac8;transform:translateX(-50%)">s</div>
<svg style="left:568.5px;top:560px" width="7" height="5" viewBox="0 0 7 5"><path d="M0 0.3 H7 L3.5 4.5 Z" fill="#000"/></svg>
<div class="a" style="left:440px;top:575px;width:137px;height:18px;background:#c3c5cb;border-top:2px solid #7d7d7d;border-left:2px solid #7d7d7d;border-right:1px solid #ececec;border-bottom:1px solid #ececec"></div>
<div class="a" style="left:442px;top:577px;width:20.30000000000001px;height:15px;background:#d1d1d1"></div>
<div class="a" style="left:462.3px;top:577px;width:10.399999999999977px;height:15px;background:#b8bcc6"></div>
<div class="a" style="left:472.7px;top:577px;width:20.80000000000001px;height:15px;background:#d1d1d1"></div>
<div class="a" style="left:493.5px;top:577px;width:13.800000000000011px;height:15px;background:#b8bcc6"></div>
<div class="a" style="left:507.3px;top:577px;width:19.499999999999943px;height:15px;background:#d1d1d1"></div>
<div class="a" style="left:526.8px;top:577px;width:2.7000000000000455px;height:15px;background:#b8bcc6"></div>
<div class="a" style="left:529.5px;top:577px;width:29.200000000000045px;height:15px;background:#d1d1d1"></div>
<div class="a" style="left:558.7px;top:577px;width:9.0px;height:15px;background:#b8bcc6"></div>
<div class="a" style="left:567.7px;top:577px;width:8.3px;height:15px;background:#c7c9cf"></div>
<div class="a" style="left:567.7px;top:577px;width:1px;height:15px;background:#e6e6e6"></div>
<div class="t" style="left:447.54999999999995px;top:578px;font-size:13.4px;line-height:14px;color:#3a3ac8;transform:translateX(-50%)">0</div>
<div class="t" style="left:457.4px;top:578px;font-size:13.4px;line-height:14px;color:#3a3ac8;transform:translateX(-50%)">0</div>
<div class="t" style="left:467.70000000000005px;top:578px;font-size:13.4px;line-height:14px;color:#3a3ac8;transform:translateX(-50%)">h</div>
<div class="t" style="left:478.2px;top:578px;font-size:13.4px;line-height:14px;color:#3a3ac8;transform:translateX(-50%)">0</div>
<div class="t" style="left:487.9px;top:578px;font-size:13.4px;line-height:14px;color:#3a3ac8;transform:translateX(-50%)">0</div>
<div class="t" style="left:500.45000000000005px;top:578px;font-size:13.4px;line-height:14px;color:#3a3ac8;transform:translateX(-50%)">m</div>
<div class="t" style="left:512.9000000000001px;top:578px;font-size:13.4px;line-height:14px;color:#3a3ac8;transform:translateX(-50%)">0</div>
<div class="t" style="left:522.55px;top:578px;font-size:13.4px;line-height:14px;color:#3a3ac8;transform:translateX(-50%)">0</div>
<div class="t" style="left:527.75px;top:578px;font-size:13.4px;line-height:14px;color:#3a3ac8;transform:translateX(-50%)">.</div>
<div class="t" style="left:535.05px;top:578px;font-size:13.4px;line-height:14px;color:#3a3ac8;transform:translateX(-50%)">0</div>
<div class="t" style="left:544.75px;top:578px;font-size:13.4px;line-height:14px;color:#3a3ac8;transform:translateX(-50%)">0</div>
<div class="t" style="left:554.45px;top:578px;font-size:13.4px;line-height:14px;color:#3a3ac8;transform:translateX(-50%)">0</div>
<div class="t" style="left:564.2px;top:578px;font-size:13.4px;line-height:14px;color:#3a3ac8;transform:translateX(-50%)">s</div>
<svg style="left:568.5px;top:581px" width="7" height="5" viewBox="0 0 7 5"><path d="M0 0.3 H7 L3.5 4.5 Z" fill="#000"/></svg>
<div class="a" style="left:582px;top:551px;width:1px;height:47px;background:#d8d9dc"></div>
<div class="grip" style="left:585px;top:555px;height:17px"></div>
<div class="a" style="left:593px;top:551px;width:24px;height:23px;background:#e8effc;border-right:1px solid #c3cad8;border-bottom:1px solid #c3cad8"></div>
<svg style="left:597px;top:555px" width="15" height="14" viewBox="0 0 15 14"><path d="M1.3 0.8 L13.6 7 L1.3 13.2 Z" fill="#3b8b5f" stroke="#3b8b5f" stroke-width="0.6" stroke-linejoin="round"/></svg>
<div class="a" style="left:621px;top:557px;width:4px;height:1.2px;background:#222"></div>
<div class="a" style="left:735px;top:556.8px;width:5px;height:1.3px;background:#222"></div>
<div class="a" style="left:736.8px;top:554.8px;width:1.3px;height:5.3px;background:#222"></div>
<div class="a" style="left:621px;top:565.8px;width:121px;height:1.5px;background:#a0a0a0"></div>
<div class="a" style="left:622.0px;top:561.5px;width:1px;height:4px;background:#c2c2c2"></div>
<div class="a" style="left:630.34px;top:563px;width:1px;height:2.5px;background:#c2c2c2"></div>
<div class="a" style="left:638.68px;top:563px;width:1px;height:2.5px;background:#c2c2c2"></div>
<div class="a" style="left:647.02px;top:563px;width:1px;height:2.5px;background:#c2c2c2"></div>
<div class="a" style="left:655.36px;top:563px;width:1px;height:2.5px;background:#c2c2c2"></div>
<div class="a" style="left:663.7px;top:563px;width:1px;height:2.5px;background:#c2c2c2"></div>
<div class="a" style="left:672.04px;top:563px;width:1px;height:2.5px;background:#c2c2c2"></div>
<div class="a" style="left:680.38px;top:563px;width:1px;height:2.5px;background:#c2c2c2"></div>
<div class="a" style="left:688.72px;top:563px;width:1px;height:2.5px;background:#c2c2c2"></div>
<div class="a" style="left:697.06px;top:563px;width:1px;height:2.5px;background:#c2c2c2"></div>
<div class="a" style="left:705.4px;top:563px;width:1px;height:2.5px;background:#c2c2c2"></div>
<div class="a" style="left:713.74px;top:563px;width:1px;height:2.5px;background:#c2c2c2"></div>
<div class="a" style="left:722.08px;top:563px;width:1px;height:2.5px;background:#c2c2c2"></div>
<div class="a" style="left:730.42px;top:563px;width:1px;height:2.5px;background:#c2c2c2"></div>
<div class="a" style="left:738.76px;top:561.5px;width:1px;height:4px;background:#c2c2c2"></div>
<div class="a" style="left:657px;top:558px;width:8.5px;height:15.5px;background:#fdfdfd;border:1px solid #707070;border-radius:2px"></div>
<div class="a" style="left:660.8px;top:563px;width:1px;height:5px;background:#666"></div>
<div class="a" style="left:747px;top:551px;width:1px;height:23px;background:#d4d4d4"></div>
<div class="a" style="left:749px;top:551px;width:1px;height:23px;background:#d4d4d4"></div>
<div class="a" style="left:1px;top:600px;width:1022px;height:20px;background:#f0f0f0;border-radius:0 0 5px 5px"></div>
<div class="a" style="left:1px;top:600px;width:1022px;height:1px;background:#e2e2e2"></div>
<div class="a" style="left:9px;top:600px;width:1px;height:20px;background:#d8d8d8"></div>
<div class="t" style="left:13.80px;top:605.3px;font-size:11px;line-height:11px;font-weight:normal;letter-spacing:-0.367px;color:#1b1b1b">Detenido.</div>
<div class="a" style="left:215px;top:601px;width:1px;height:19px;background:#d8d8d8"></div>
<div class="a" style="left:866px;top:601px;width:1px;height:19px;background:#d8d8d8"></div>
<div class="a" style="left:1020px;top:611.5px;width:1.6px;height:1.6px;background:#9a9a9a"></div>
<div class="a" style="left:1017.3px;top:614.3px;width:1.6px;height:1.6px;background:#9a9a9a"></div>
<div class="a" style="left:1020px;top:614.3px;width:1.6px;height:1.6px;background:#9a9a9a"></div>
<div class="a" style="left:1014.6px;top:617px;width:1.6px;height:1.6px;background:#9a9a9a"></div>
<div class="a" style="left:1017.3px;top:617px;width:1.6px;height:1.6px;background:#9a9a9a"></div>
<div class="a" style="left:1020px;top:617px;width:1.6px;height:1.6px;background:#9a9a9a"></div>
</body></html>
